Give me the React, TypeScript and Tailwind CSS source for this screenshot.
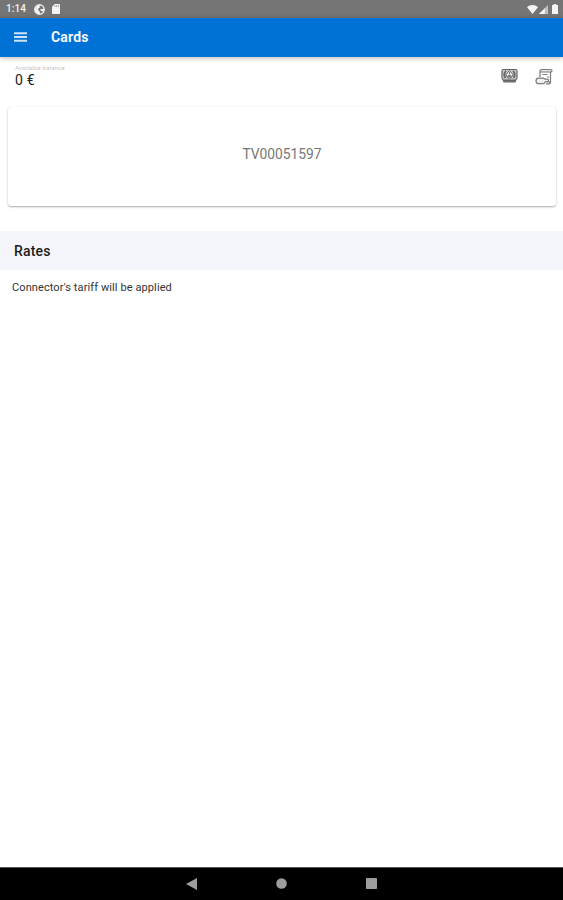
import type { ReactNode } from 'react';

type IconButtonProps = {
  label: string;
  children: ReactNode;
};

function IconButton({ label, children }: IconButtonProps) {
  return (
    <button type="button" aria-label={label} className="block shrink-0">
      {children}
    </button>
  );
}

function StatusBar() {
  return (
    <div className="flex h-[18px] items-center justify-between bg-[#757575] pr-[5px] pl-[6px] text-[#f4f4f4]">
      <div className="flex items-center">
        <span className="w-[28px] text-[10px] leading-[18px] font-medium tracking-[0.1px]">1:14</span>
        <svg width="11" height="11" viewBox="0 0 11 11">
          <circle cx="5.5" cy="5.5" r="4.7" fill="none" stroke="currentColor" strokeWidth="1.4" />
          <path d="M1 4.500 3 2 5.500 1 6 3.200 4.300 4.500v1.800L6 8 5.500 10.200C2.500 9.800 .8 7.500 1 4.500z" fill="currentColor" />
          <path d="M6 5h4L9.500 7 7.500 7.600z" fill="currentColor" />
        </svg>
        <svg className="ml-[7px]" width="8" height="10" viewBox="0 0 8 10">
          <path d="M2.700 0H7.300Q8 0 8 .8V9.200Q8 10 7.200 10H.8Q0 10 0 9.200V2.800z" fill="currentColor" />
          <path d="M3 1.300v1.600M4.700 1.300v1.600M6.400 1.300v1.600" stroke="#757575" strokeWidth="0.7" />
        </svg>
      </div>
      <div className="flex items-center">
        <svg width="11" height="9" viewBox="0 0 11 9">
          <path d="M0 2.200C3.300-.7 7.700-.7 11 2.200L5.500 9z" fill="currentColor" />
        </svg>
        <svg className="ml-px" width="9" height="9" viewBox="0 0 9 9">
          <path d="M9 0v9H0z" fill="currentColor" opacity="0.6" />
          <path d="M5.800 3.200V9H0z" fill="currentColor" />
        </svg>
        <svg className="ml-[4px]" width="6" height="10" viewBox="0 0 6 10">
          <path d="M1.700 0h2.600v1H6v9H0V1h1.700z" fill="currentColor" />
        </svg>
      </div>
    </div>
  );
}

function Header() {
  return (
    <header className="flex h-[39px] items-center bg-[#0072d5] pb-px pl-[14px] text-[#f2f7fc] shadow-[0_1px_5px_rgba(0,0,0,0.3)]">
      <IconButton label="Menu">
        <svg width="13" height="10" viewBox="0 0 13 10">
          <path d="M0 1.300h13M0 5h13M0 8.700h13" stroke="currentColor" strokeWidth="2.100" opacity="0.85" />
        </svg>
      </IconButton>
      <h1 className="ml-[24px] text-[14px] leading-[20px] font-bold tracking-[0.2px]">Cards</h1>
    </header>
  );
}

function Balance() {
  return (
    <div className="flex h-[50px] justify-between pt-[7px] pr-[10px] pl-[15px]">
      <div>
        <div className="h-[7px] text-[6px] leading-[7px] tracking-[0.2px] text-[#c6c6c6]">Available balance</div>
        <div className="text-[14px] leading-[18px] tracking-[0.2px] text-[#202020]">0 €</div>
      </div>
      <div className="flex items-start pt-[4px]">
        <div className="text-[#646464]">
          <IconButton label="Top up">
            <svg width="17" height="16" viewBox="0 0 17 16" fill="none" stroke="currentColor">
              <path
                d="M2.500 1.500h12q1.500 0 1.500 1.700v6.600q0 1.400-1 1.700l-1 2.300H3l-1-2.300q-1-.3-1-1.700V3.200q0-1.700 1.500-1.700z"
                fill="#c9c9c9"
                strokeWidth="1.200"
              />
              <path d="M5 2.800Q1.800 6.500 4.500 10M12 2.800q3.200 3.700.5 7.200" strokeWidth="1.700" />
              <path d="M8.500 2.500 12 6.500 10 10H7L5 6.500z" fill="#f3f3f3" strokeWidth="1" />
              <path d="M8.500 4.200v2M7.300 7.300h2.400v1.500H7.300z" strokeWidth="1" />
              <path d="M3 12.500h11" strokeWidth="2" />
            </svg>
          </IconButton>
        </div>
        <div className="ml-[17px] text-[#7b7b7b]">
          <IconButton label="Transactions">
            <svg width="18" height="17" viewBox="0 0 18 17" fill="none" stroke="currentColor" strokeWidth="1.200">
              <path d="M5 9V3Q5 1.500 6.500 1.500h9Q17 1.500 17 2.700q0 1.300-1.500 1.300H5" fill="#e4e4e4" />
              <path d="M15.500 4V14.500Q15.500 15.800 14 15.800H11" />
              <path d="M7.500 6.500h5M12 9h2" />
              <path
                d="M3.500 10.200h5l1.500 1h2.500q1 0 1 1.200t-1 1.200h-2L9 15.600H3.500Q1 15.600 1 13t2.500-2.800z"
                fill="#f0f0f0"
              />
              <path d="M12.500 14h3" />
            </svg>
          </IconButton>
        </div>
      </div>
    </div>
  );
}

function TagCard({ code }: { code: string }) {
  return (
    <div className="mr-[7px] ml-[8px] flex h-[99px] items-center justify-center rounded-[3px] bg-white pb-[5px] text-[13.8px] text-[#777] shadow-[0_1px_2px_rgba(0,0,0,0.32),0_0_1px_rgba(0,0,0,0.08)]">
      {code}
    </div>
  );
}

function NavBar() {
  return (
    <nav className="flex h-[33px] items-center justify-center gap-[79px] border-t border-[#555] bg-black pb-px text-[#9c9c9c]">
      <IconButton label="Back">
        <svg width="11" height="12" viewBox="0 0 11 12">
          <path d="M11 0v12L0 6z" fill="currentColor" />
        </svg>
      </IconButton>
      <IconButton label="Home">
        <svg width="11" height="11" viewBox="0 0 11 11">
          <circle cx="5.500" cy="5.500" r="5.300" fill="currentColor" />
        </svg>
      </IconButton>
      <IconButton label="Recent apps">
        <svg width="11" height="11" viewBox="0 0 11 11">
          <rect width="11" height="11" rx="0.800" fill="currentColor" />
        </svg>
      </IconButton>
    </nav>
  );
}

export default function App() {
  return (
    <div className="flex h-[900px] w-[563px] flex-col bg-white font-['Roboto',sans-serif]">
      <StatusBar />
      <Header />
      <main className="flex-1">
        <Balance />
        <TagCard code="TV00051597" />
        <h2 className="mt-[25px] flex h-[39px] items-center bg-[#f4f5fa] pt-px pl-[14px] text-[14px] font-medium tracking-[0.2px] text-[#1c1c1c]">
          Rates
        </h2>
        <p className="pt-[10px] pl-[12px] text-[11px] leading-[16px] tracking-[0.1px] text-[#333]">
          Connector's tariff will be applied
        </p>
      </main>
      <NavBar />
    </div>
  );
}
